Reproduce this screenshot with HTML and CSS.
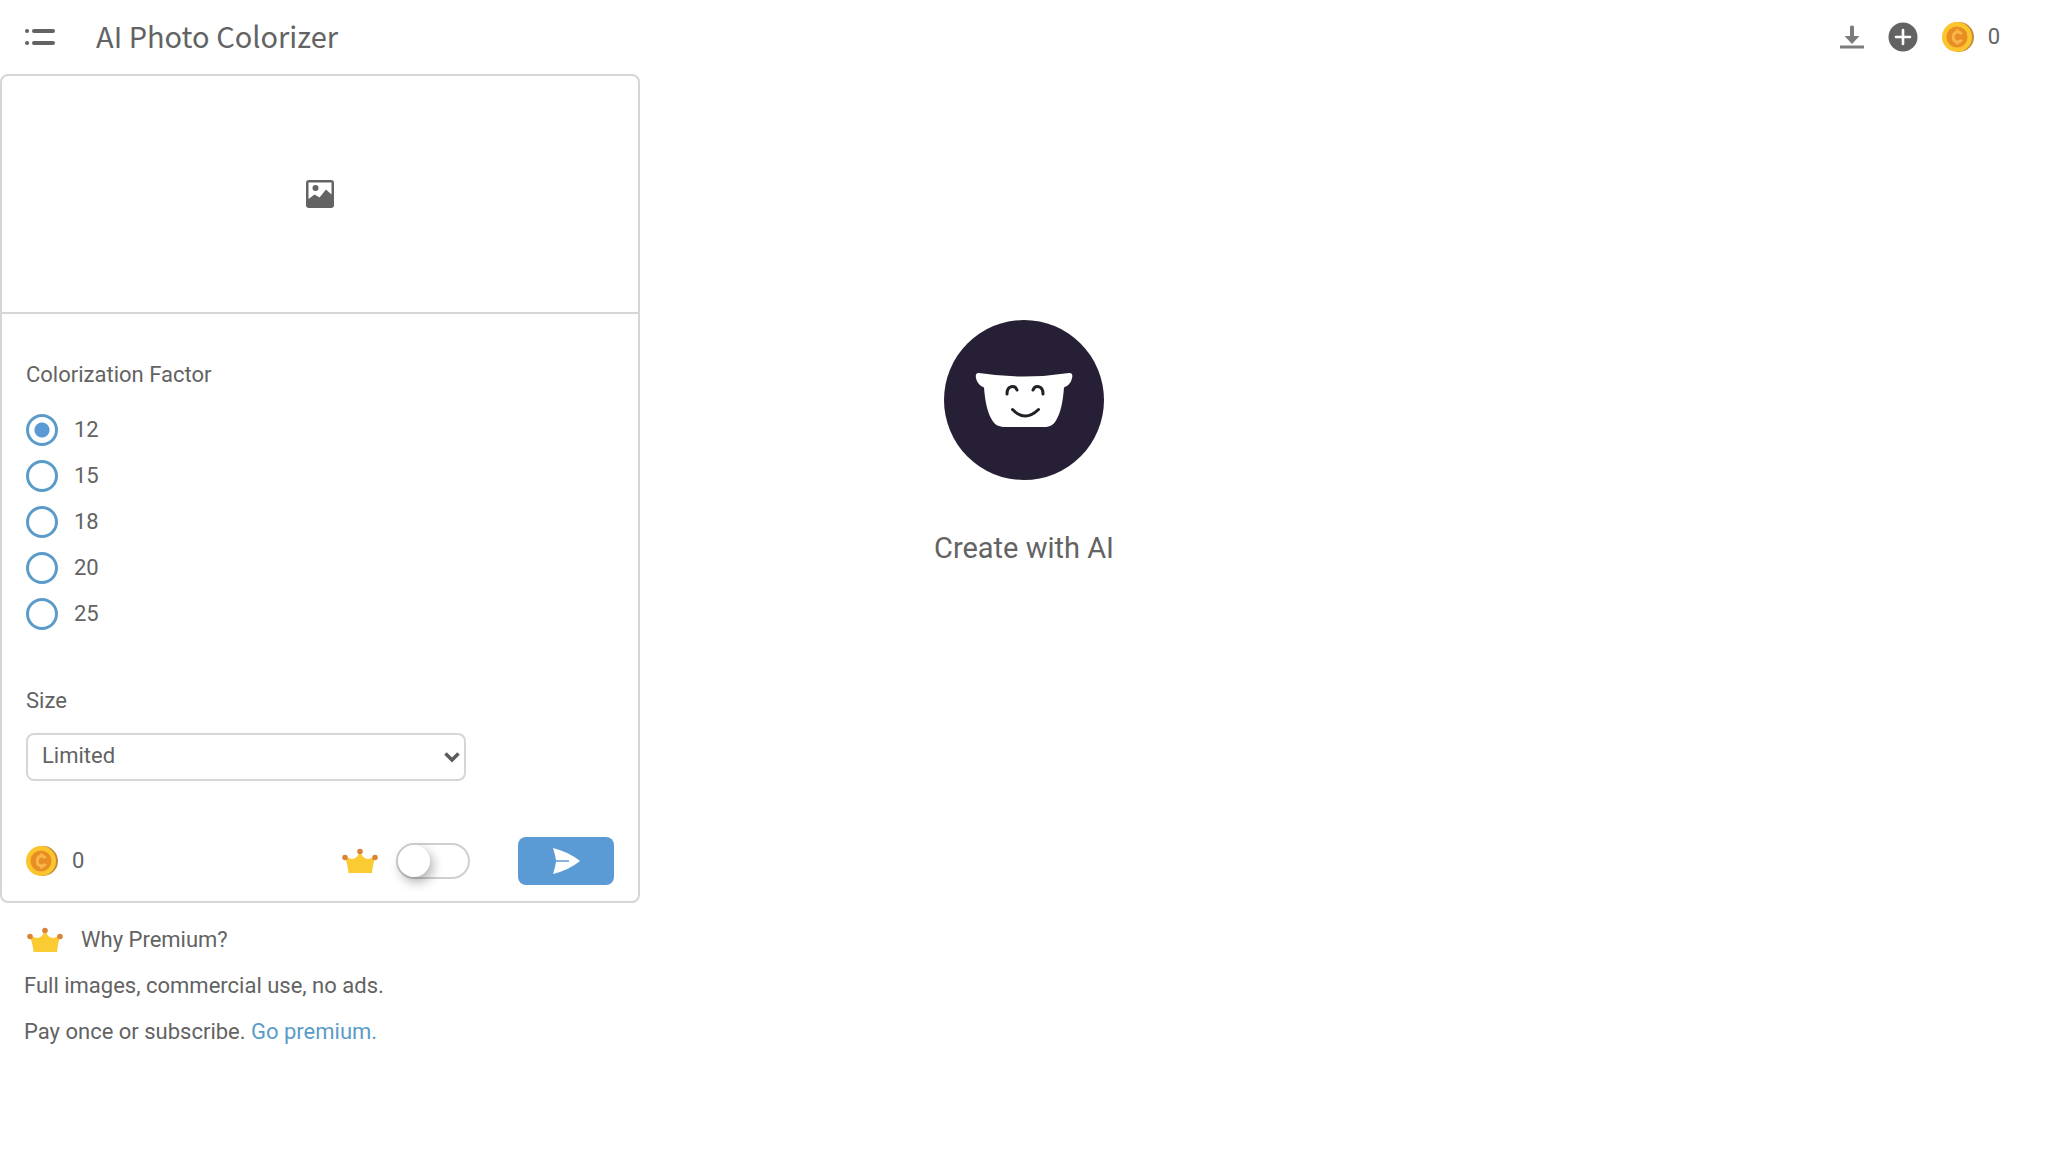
FILE: index.html
```html
<!DOCTYPE html>
<html lang="en">
<head>
<meta charset="utf-8">
<meta name="viewport" content="width=device-width, initial-scale=1">
<title>AI Photo Colorizer</title>
<link rel="stylesheet" href="styles.css">
</head>
<body>
<svg class="symbols" aria-hidden="true">
  <symbol id="coin" viewBox="0 0 32 32">
    <circle cx="17" cy="16" r="15" fill="#c58a3a"/>
    <circle cx="15" cy="16" r="15" fill="#fbc52d"/>
    <circle cx="15" cy="16" r="10.500" fill="#e98e22"/>
    <path d="M19.500 13.200c-.8-1.400-2-2.200-3.800-2.200-2.700 0-4.400 2-4.400 5s1.700 5 4.400 5c1.800 0 3-.8 3.800-2.200M15.500 8.500v3M15.500 20.500v3" fill="none" stroke="#f8b54a" stroke-width="3"/>
  </symbol>
  <symbol id="crown" viewBox="0 0 36 26">
    <path d="M2 8.500l7.500 2.500Q16 11 17 4h2q1 7 7.500 7L34 8.500Q31 14 30 25H6.500Q5.500 14 2 8.500z" fill="#fbcb33"/>
    <g fill="#d98436"><circle cx="3" cy="9.500" r="2.800"/><circle cx="18" cy="3.500" r="2.800"/><circle cx="33" cy="9.500" r="2.800"/></g>
  </symbol>
</svg>
<header class="topbar">
  <button class="icon-button" type="button" aria-label="Menu">
    <svg width="32" height="18" viewBox="0 0 32 18" fill="none" stroke="#636363" stroke-width="4" stroke-linecap="round"><path d="M3 3h.1M10 3h19M3 15h.1M10 15h19"/></svg>
  </button>
  <h1 class="title">AI Photo Colorizer</h1>
  <nav class="tools" aria-label="Tools">
    <button class="icon-button" type="button" aria-label="Download">
      <svg width="24" height="24" viewBox="0 0 24 24" fill="#7c7c7c"><path d="M10 1.500q2-2 4 0V11h5.500L12 19 4.500 11H10zM0 20.500h24v3H0z"/></svg>
    </button>
    <button class="icon-button" type="button" aria-label="Add">
      <svg width="30" height="30" viewBox="0 0 30 30"><circle cx="15" cy="15" r="14.500" fill="#636363"/><path d="M15 8v14M8 15h14" stroke="#fff" stroke-width="2.600" stroke-linecap="round"/></svg>
    </button>
    <span class="credits"><svg class="coin"><use href="#coin"/></svg>0</span>
  </nav>
</header>
<main class="layout">
  <aside>
    <form class="panel">
      <button class="upload" type="button" aria-label="Choose image">
        <svg width="30" height="30" viewBox="0 0 30 30"><rect x="1" y="1" width="28" height="28" rx="3" fill="#636363"/><path d="M3.500 3.500h23v12L21 10.500l-6.500 8-5-3-6 4.500z" fill="#fff"/><circle cx="10.500" cy="9" r="3" fill="#636363"/></svg>
      </button>
      <div class="fields">
        <fieldset class="factor">
          <legend class="label">Colorization Factor</legend>
          <label class="option"><input class="radio" type="radio" name="factor" value="12" checked>12</label>
          <label class="option"><input class="radio" type="radio" name="factor" value="15">15</label>
          <label class="option"><input class="radio" type="radio" name="factor" value="18">18</label>
          <label class="option"><input class="radio" type="radio" name="factor" value="20">20</label>
          <label class="option"><input class="radio" type="radio" name="factor" value="25">25</label>
        </fieldset>
        <div class="size">
          <label class="label" for="size">Size</label>
          <div class="select-wrap">
            <select class="select" id="size"><option>Limited</option></select>
            <svg class="chevron" width="16" height="12" viewBox="0 0 16 12" fill="none" stroke="#5c5c5c" stroke-width="3.500"><path d="M1.500 2.500L8 9l6.500-6.500"/></svg>
          </div>
        </div>
        <div class="actions">
          <span class="cost"><svg class="coin"><use href="#coin"/></svg>0</span>
          <label class="premium"><svg class="crown" role="img" aria-label="Premium"><use href="#crown"/></svg><input class="switch" type="checkbox" role="switch"></label>
          <button class="send" type="submit" aria-label="Send">
            <svg width="28" height="28" viewBox="0 0 28 28"><path d="M1 1Q17 5 28 14 17 23 1 27q2-6 3-12.200h13v-1.600H4Q3 7 1 1z" fill="#fff"/></svg>
          </button>
        </div>
      </div>
    </form>
    <section class="pitch">
      <h2 class="pitch-title"><svg class="crown"><use href="#crown"/></svg>Why Premium?</h2>
      <p class="line">Full images, commercial use, no ads.</p>
      <p class="line">Pay once or subscribe. <a class="link" href="#premium">Go premium.</a></p>
    </section>
  </aside>
  <section class="stage">
    <svg class="logo" viewBox="0 0 160 160" role="img" aria-label="Smiling pot">
      <circle cx="80" cy="80" r="80" fill="#261f35"/>
      <path d="M35 53Q80 60 125 53c3-.3 4 2 3 5-1 5-4 8-8 9.500-1 13-3 25-8 33-3 5-7 6.500-12 6.500H61c-6 0-10-2-13-7-5-8-7-20-8-32.500-4-1.500-7-5-8-9.500-.6-3 0-5.500 3-5z" fill="#fff"/>
      <path d="M63 74c0-9 8-9 10-4M89 70c2-5 10-5 10 4M68.500 89.500q12.500 13 26 0" fill="none" stroke="#202027" stroke-width="3" stroke-linecap="round"/>
    </svg>
    <p class="tagline">Create with AI</p>
  </section>
</main>
</body>
</html>
```
FILE: styles.css
```css
* { box-sizing: border-box; }
body {
  margin: 0;
  background: #fff;
  color: #636363;
  font: 22px/32px Roboto, "Liberation Sans", sans-serif;
}
button, select { font: inherit; color: inherit; }
h1, h2, p { margin: 0; font-weight: 400; }
svg { display: block; flex: none; }
.symbols { position: absolute; width: 0; height: 0; }

.topbar { display: flex; align-items: center; height: 74px; padding: 0 48px 0 24px; }
.icon-button { padding: 0; border: 0; background: none; cursor: pointer; }
.title { margin-left: 40px; padding-bottom: 4px; font: 29px/40px "Noto Sans CJK SC", "Noto Sans", sans-serif; }
.tools { display: flex; align-items: center; gap: 24px; margin-left: auto; }
.credits, .cost { display: flex; align-items: center; gap: 14px; }
.coin { width: 32px; height: 32px; }
.crown { width: 36px; height: 26px; }

.layout { display: grid; grid-template-columns: 5fr 6fr 5fr; }
.panel { border: 2px solid #d6d6d6; border-radius: 8px; }
.upload {
  display: flex; align-items: center; justify-content: center;
  width: 100%; height: 238px; padding: 0;
  border: 0; border-bottom: 2px solid #d6d6d6; background: none; cursor: pointer;
}
.fields { padding: 45px 24px 16px; }
.factor { margin: 0; padding: 0; border: 0; }
.label { display: block; padding: 0; margin-bottom: 16px; }
.option { display: flex; align-items: center; gap: 16px; height: 46px; }
.radio {
  appearance: none; width: 32px; height: 32px; margin: 0;
  border: 3px solid #5b9bc9; border-radius: 50%; background: #fff;
}
.radio:checked { background: radial-gradient(circle, #5b9bd5 7px, #fff 8px); }
.size { margin-top: 48px; }
.select-wrap { display: grid; align-items: center; width: 440px; max-width: 100%; }
.select-wrap > * { grid-area: 1 / 1; }
.select {
  appearance: none; width: 100%; height: 48px; padding: 0 40px 2px 14px;
  border: 2px solid #d6d6d6; border-radius: 8px; background: #fff;
}
.chevron { justify-self: end; margin-right: 6px; pointer-events: none; }
.actions { display: flex; align-items: center; margin-top: 56px; }
.premium { display: flex; align-items: center; gap: 18px; margin-left: auto; }
.switch {
  appearance: none; display: flex; align-items: center;
  width: 74px; height: 36px; margin: 0;
  border: 2px solid #d0d0d0; border-radius: 18px; background: #fff;
}
.switch::before {
  content: ""; width: 32px; height: 32px; border-radius: 50%;
  background: #fff; box-shadow: 3px 5px 12px rgba(0, 0, 0, .32);
}
.switch:checked::before { margin-left: auto; }
.send {
  display: flex; align-items: center; justify-content: center;
  width: 96px; height: 48px; margin-left: 48px; padding: 0;
  border: 0; border-radius: 8px; background: #5b9bd5; cursor: pointer;
}
.pitch { padding: 14px 24px; }
.pitch-title { display: flex; align-items: center; gap: 18px; height: 46px; font-size: 22px; padding-left: 3px; }
.line { line-height: 46px; }
.link { color: #5b9bc9; text-decoration: none; }

.stage { display: flex; flex-direction: column; align-items: center; padding-top: 246px; }
.logo { width: 160px; height: 160px; }
.tagline { margin-top: 48px; font-size: 29px; line-height: 40px; }
```
